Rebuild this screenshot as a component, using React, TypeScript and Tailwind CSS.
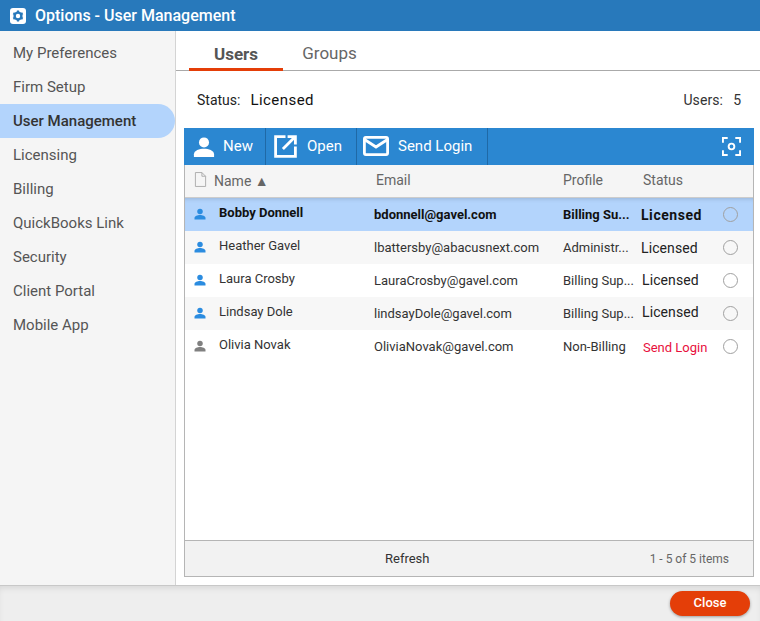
const navItems = ["My Preferences", "Firm Setup", "User Management", "Licensing", "Billing", "QuickBooks Link", "Security", "Client Portal", "Mobile App"];

const users = [
  { name: "Bobby Donnell", email: "bdonnell@gavel.com", profile: "Billing Su...", status: "Licensed", nudge: "mt-[2px]" },
  { name: "Heather Gavel", email: "lbattersby@abacusnext.com", profile: "Administr...", status: "Licensed", nudge: "mt-[2px]" },
  { name: "Laura Crosby", email: "LauraCrosby@gavel.com", profile: "Billing Sup...", status: "Licensed", nudge: "ml-[1px]" },
  { name: "Lindsay Dole", email: "lindsayDole@gavel.com", profile: "Billing Sup...", status: "Licensed", nudge: "ml-[1px] -mt-[2px]" },
  { name: "Olivia Novak", email: "OliviaNovak@gavel.com", profile: "Non-Billing", status: "Send Login", nudge: "ml-[2px] mt-[2px]" },
];

function PersonIcon({ className }: { className: string }) {
  return (
    <svg viewBox="0 0 24 24" className={className} fill="currentColor">
      <circle cx="12" cy="7" r="5.5" />
      <path d="M1 23v-3c0-4 6-6 11-6s11 2 11 6v3z" />
    </svg>
  );
}

export default function App() {
  return (
    <div className="w-[760px] h-[621px] flex flex-col overflow-hidden bg-white font-['Roboto',sans-serif]">
      {/* title bar */}
      <div className="h-[31px] bg-[#2879bb] flex items-center pl-[10px] text-white">
        <svg viewBox="0 0 16 16" className="w-4 h-4 mr-[9px]">
          <rect width="16" height="16" rx="3" fill="#fff" />
          <circle cx="8" cy="8" r="3.4" fill="none" stroke="#2879bb" strokeWidth="2.4" />
          <path d="M8 2.6v2M8 11.4v2M3.3 5.3l1.8 1M10.9 9.7l1.8 1M3.3 10.7l1.8-1M10.9 6.3l1.8-1" stroke="#2879bb" strokeWidth="2.2" />
        </svg>
        <span className="text-[16px] font-medium leading-none">Options - User Management</span>
      </div>

      <div className="flex-1 flex min-h-0">
        {/* sidebar */}
        <div className="w-[176px] shrink-0 bg-[#f5f5f5] border-r border-[#d4d4d4] pt-[5px]">
          {navItems.map((item) => (
            <div
              key={item}
              className={
                item === "User Management"
                  ? "h-[34px] w-[175px] flex items-center pl-[13px] text-[15px] font-medium text-[#333333] bg-[#b3d4fc] rounded-r-[17px]"
                  : "h-[34px] w-[175px] flex items-center pl-[13px] text-[15px] text-[#555555]"
              }
            >
              {item}
            </div>
          ))}
        </div>

        {/* main */}
        <div className="flex-1 flex flex-col min-w-0">
          <div className="h-[40px] shrink-0 flex items-end pl-[13px] border-b border-[#aaaaaa]">
            <div className="w-[94px] h-[39px] flex items-center justify-center pt-[10px] text-[17px] font-bold text-[#555555] border-b-[3px] border-[#e43e08] -mb-px">
              Users
            </div>
            <div className="w-[93px] h-[39px] flex items-center justify-center pt-[7px] text-[17px] text-[#666666]">
              Groups
            </div>
          </div>

          <div className="h-[57px] shrink-0 flex items-center pl-[21px] pr-[19px] pt-[1px] text-[14px] text-[#222222]">
            <span>Status:</span>
            <span className="ml-[10px] text-[15px] tracking-[0.45px] text-[#111111]">Licensed</span>
            <span className="ml-auto text-[#333333] tracking-[0.1px]">Users:</span>
            <span className="ml-[10px] text-[#333333]">5</span>
          </div>

          <div className="ml-[8px] mr-[6px] h-[449px] flex flex-col">
            {/* toolbar */}
            <div className="h-[37px] shrink-0 bg-[#2b87d1] flex items-stretch text-white text-[15px]">
              <div className="w-[82px] flex items-center pl-[9px] border-r border-[#1f69a6]">
                <PersonIcon className="w-[22px] h-[22px]" />
                <span className="ml-[8px]">New</span>
              </div>
              <div className="w-[91px] flex items-center pl-[7px] border-r border-[#1f69a6]">
                <svg viewBox="0 0 24 24" className="w-[25px] h-[25px]" fill="none" stroke="currentColor" strokeWidth="2.7">
                  <path d="M12 2.5H2.5v19h19V12" />
                  <path d="M9.5 14.5L21.5 2.5M14 2.5h7.5V10" />
                </svg>
                <span className="ml-[9px]">Open</span>
              </div>
              <div className="w-[131px] flex items-center pl-[6px] border-r border-[#1f69a6]">
                <svg viewBox="0 0 26 20" className="w-[26px] h-[20px] -mt-[1px]" fill="none" stroke="currentColor" strokeWidth="2.8">
                  <rect x="1.4" y="1.4" width="23.2" height="17.2" rx="1.5" />
                  <path d="M1.5 3.5L13 11l11.5-7.5" />
                </svg>
                <span className="ml-[9px] -mt-[1px]">Send Login</span>
              </div>
              <div className="ml-auto mr-[13px] flex items-center">
                <svg viewBox="0 0 20 20" className="w-[19px] h-[19px]" fill="none" stroke="currentColor" strokeWidth="2">
                  <path d="M1 6V1h5M14 1h5v5M19 14v5h-5M6 19H1v-5" />
                  <circle cx="10" cy="10" r="3" />
                </svg>
              </div>
            </div>

            <div className="flex-1 flex flex-col min-h-0 border-x border-b border-[#b5b5b5]">
              {/* header */}
              <div className="h-[33px] shrink-0 bg-[#f5f5f5] border-b border-[#cccccc] grid grid-cols-[29px_162px_187px_80px_1fr] items-center text-[14px] text-[#666666]">
                <svg viewBox="0 0 14 16" className="w-[13px] h-[15px] ml-[9px] -mt-[3px]" fill="none" stroke="#aaaaaa">
                  <path d="M1.5.5h7l4 4v11h-11zM8.5.5v4h4" />
                </svg>
                <span className="mt-[1px]">Name ▲</span>
                <span className="-mt-[2px]">Email</span>
                <span className="-mt-[2px]">Profile</span>
                <span className="-mt-[2px]">Status</span>
              </div>

              {/* rows */}
              <div className="flex-1 min-h-0">
                {users.map((u, i) => (
                  <div
                    key={u.name}
                    className={
                      i === 0
                        ? "h-[33px] grid grid-cols-[34px_155px_189px_78px_83px_1fr] items-center text-[13px] font-bold text-[#111111] bg-[#b3d4fc] shadow-[inset_0_4px_4px_-3px_rgba(0,0,0,0.15)]"
                        : i % 2 === 1
                          ? "h-[33px] grid grid-cols-[34px_155px_189px_78px_83px_1fr] items-center text-[13px] text-[#333333] bg-[#f7f7f7]"
                          : "h-[33px] grid grid-cols-[34px_155px_189px_78px_83px_1fr] items-center text-[13px] text-[#333333] bg-white"
                    }
                  >
                    <PersonIcon className={i === 4 ? "w-[12px] h-[12px] ml-[9px] -mt-[1px] text-[#808080]" : "w-[12px] h-[12px] ml-[9px] -mt-[1px] text-[#2b8ce0]"} />
                    <span className="-mt-[4px]">{u.name}</span>
                    <span>{u.email}</span>
                    <span className="whitespace-nowrap">{u.profile}</span>
                    <div className={u.nudge}>
                      <span
                        className={
                          u.status === "Send Login"
                            ? "text-[13px] text-[#e8103c]"
                            : i === 0
                              ? "text-[14px] tracking-[0.55px] text-[#111111]"
                              : "text-[14px] tracking-[0.1px] text-[#222222]"
                        }
                      >
                        {u.status}
                      </span>
                    </div>
                    <span className="w-[15px] h-[15px] rounded-full border-[1.5px] border-[#a0a0a0] -mt-[1px] -ml-[1px]" />
                  </div>
                ))}
              </div>

              {/* footer */}
              <div className="h-[36px] shrink-0 bg-[#f2f2f2] border-t border-[#b5b5b5] flex items-center">
                <span className="ml-[200px] text-[13px] text-[#333333]">Refresh</span>
                <span className="ml-auto mr-[24px] text-[12px] text-[#666666]">1 - 5 of 5 items</span>
              </div>
            </div>
          </div>
        </div>
      </div>

      {/* bottom bar */}
      <div className="h-[36px] shrink-0 bg-[#eeeeee] border-t border-[#c8c8c8] shadow-[inset_0_4px_6px_-2px_rgba(0,0,0,0.1)] flex items-center justify-end pr-[10px] pb-[1px]">
        <button className="w-[80px] h-[25px] rounded-[13px] bg-[#e43e08] text-white text-[13px] font-medium shadow-[0_1px_3px_rgba(0,0,0,0.35)]">
          Close
        </button>
      </div>
    </div>
  );
}
